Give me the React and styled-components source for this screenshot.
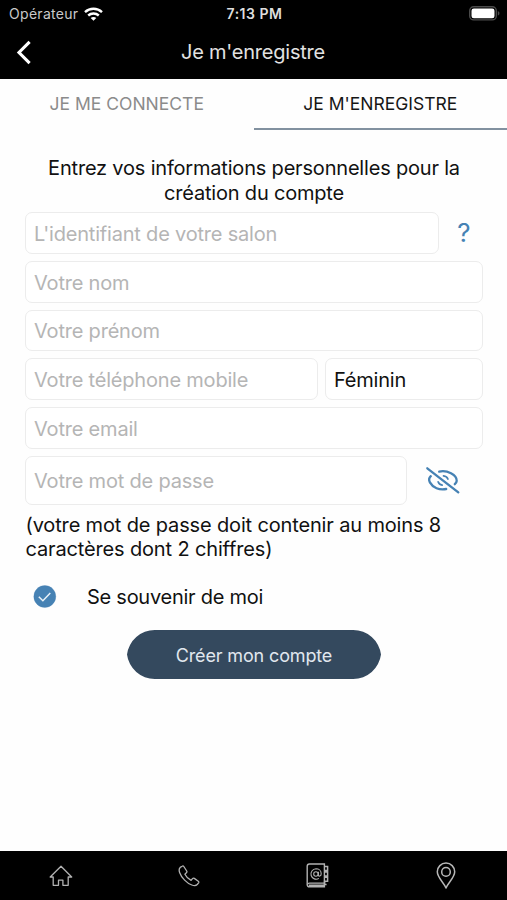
import React, { useState } from 'react';
import styled, { createGlobalStyle } from 'styled-components';

const GlobalStyle = createGlobalStyle`
  * { box-sizing: border-box; }
  body {
    margin: 0;
    background: #fff;
    font-family: Inter, Roboto, "Liberation Sans", sans-serif;
    color: #111;
  }
`;

const Screen = styled.div`
  height: 900px;
  display: flex;
  flex-direction: column;
  background: #fefefe;
`;

const StatusBar = styled.div`
  height: 28px;
  display: grid;
  grid-template-columns: 1fr auto 1fr;
  align-items: center;
  padding: 0 7px 1px 9px;
  background: #000;
`;

const Carrier = styled.div`
  display: flex;
  align-items: center;
  gap: 6px;
  font-size: 14px;
  letter-spacing: 0.3px;
  color: #c9c9c9;
`;

const Clock = styled.div`
  font-size: 14px;
  font-weight: 600;
  letter-spacing: 0.5px;
  color: #dedede;
`;

const BatterySlot = styled.div`
  display: flex;
  justify-content: flex-end;
`;

const NavBar = styled.div`
  height: 51px;
  display: grid;
  grid-template-columns: 60px 1fr 60px;
  align-items: center;
  padding-bottom: 4px;
  background: #000;
`;

const BackButton = styled.button`
  display: flex;
  padding: 1px 0 0 15px;
  border: none;
  background: none;
`;

const Title = styled.h1`
  margin: 0;
  padding-right: 1px;
  text-align: center;
  white-space: nowrap;
  font-size: 20px;
  font-weight: 400;
  letter-spacing: -0.23px;
  color: #e2e2e2;
`;

const Tabs = styled.div`
  display: flex;
  height: 51px;
`;

const Tab = styled.button`
  flex: 1;
  padding: 0 0 1px;
  border: none;
  border-bottom: 2px solid ${p => (p.$active ? '#8291a0' : 'transparent')};
  background: none;
  font: inherit;
  font-size: 17.5px;
  white-space: nowrap;
  color: ${p => (p.$active ? '#161616' : '#8b8b8b')};
`;

const Form = styled.div`
  flex: 1;
  display: flex;
  flex-direction: column;
  padding: 26px 24px 0 25px;
`;

const Intro = styled.p`
  margin: 0 0 7px;
  text-align: center;
  white-space: nowrap;
  font-size: 20px;
  line-height: 24.5px;
  letter-spacing: -0.19px;
`;

const Row = styled.div`
  display: flex;
  align-items: center;
  gap: 7px;
  margin-bottom: 7px;
`;

const Field = styled.div`
  flex: ${p => (p.$width ? `0 0 ${p.$width}` : '1')};
  height: ${p => p.$height || '41.8px'};
  display: flex;
  align-items: center;
  padding: 2px 8px 0;
  border: 1px solid #ececec;
  border-radius: 7px;
  background: #fff;
  white-space: nowrap;
  font-size: 20px;
  letter-spacing: -0.2px;
  color: ${p => (p.$filled ? '#111' : '#b5b5b5')};
`;

const Help = styled.span`
  width: 36px;
  text-align: center;
  font-size: 26px;
  color: #4682b4;
  line-height: 30px;
`;

const EyeButton = styled.button`
  display: flex;
  margin-left: 11px;
  padding: 0;
  border: none;
  background: none;
`;

const Hint = styled.p`
  margin: 1px 0 0;
  padding-left: 0.5px;
  white-space: nowrap;
  font-size: 20px;
  line-height: 24.5px;
  letter-spacing: -0.15px;
`;

const Remember = styled.div`
  display: flex;
  align-items: center;
  gap: 30px;
  height: 24px;
  margin: 23px 0 21px 8px;
  font-size: 20px;
  letter-spacing: -0.26px;
`;

const Submit = styled.button`
  align-self: center;
  width: 254px;
  height: 49px;
  padding: 2px 0 0;
  border: none;
  background: #34495e;
  clip-path: path('M0 24.5 A28 28 0 0 1 27.8 0 H226.2 A28 28 0 0 1 254 24.5 A28 28 0 0 1 226.2 49 H27.8 A28 28 0 0 1 0 24.5 Z');
  font: inherit;
  font-size: 18px;
  letter-spacing: -0.15px;
  color: #e1e7ee;
`;

const TabBar = styled.nav`
  height: 49px;
  display: grid;
  grid-template-columns: repeat(4, 128.5px);
  justify-content: center;
  align-items: center;
  justify-items: center;
  background: #000;
`;

const WifiIcon = () => (
  <svg width="19" height="14" viewBox="0 0 19 14" fill="none" stroke="#fff" strokeWidth="2.4">
    <path d="M1 5.1C5.8.7 13.2.7 18 5.1" />
    <path d="M4.2 8.5c3-2.7 7.6-2.7 10.6 0" />
    <path d="M9.5 13.8 6.7 11c1.6-1.5 4-1.5 5.6 0z" fill="#fff" stroke="none" />
  </svg>
);

const BatteryIcon = () => (
  <svg width="31" height="15" viewBox="0 0 31 15">
    <rect x=".7" y=".7" width="26.6" height="13.2" rx="4" fill="none" stroke="#4b4b4b" strokeWidth="1.4" />
    <rect x="2.5" y="2.4" width="23" height="9.8" rx="2.3" fill="#fff" />
    <path d="M28.8 5c2.2.8 2.2 3.8 0 4.6z" fill="#4b4b4b" />
  </svg>
);

const BackIcon = () => (
  <svg width="16" height="25" viewBox="0 0 16 25" fill="none" stroke="#fff" strokeWidth="3.1">
    <path d="M14.6 1.8 4 12.5l10.6 10.7" />
  </svg>
);

const EyeOffIcon = () => (
  <svg width="36" height="30" viewBox="0 0 36 30" fill="none" stroke="#4682b4" strokeWidth="2.3" strokeLinecap="round">
    <path d="m2.3 3.3 31 24" />
    <path d="M14.2 6.6C22 4.6 32 10 31.7 15.8c-.1 1.3-.7 2.3-1.9 3.4" />
    <path d="M5.8 11.2c-1.8 1.7-2.1 4-.9 6.2 2.9 5.3 9.4 8 16.3 6.6" />
    <path d="M18.5 10.8c2.1.2 3.8 1.4 4.4 3.3M13.1 16.8c.6 1.9 2 3 4.1 3.3" strokeWidth="1.7" />
  </svg>
);

const CheckIcon = ({ checked }) => (
  <svg width="24" height="24" viewBox="0 0 24 24" fill="none">
    <circle cx="11.8" cy="11.5" r="11" fill={checked ? '#4682b4' : '#fff'} stroke="#4682b4" strokeWidth=".3" />
    {checked && <path d="m5.8 11.8 4.1 4 7.4-7.8" stroke="#e8f1f8" strokeWidth="1.5" />}
  </svg>
);

const HomeIcon = () => (
  <svg width="24" height="22" viewBox="0 0 24 22" fill="none" stroke="#b2b2b2" strokeWidth="1.3" strokeLinejoin="round">
    <path d="M12 1.2 1.2 12h3v8.3h5.3v-5.2h4.4v5.2h5.3V12h3.5z" />
  </svg>
);

const PhoneIcon = () => (
  <svg width="22" height="22" viewBox="0 0 22 22" fill="none" stroke="#b2b2b2" strokeWidth="1.3" strokeLinejoin="round">
    <path d="M4.1 1.2 2.2 2.4C-.2 4.5 1.8 10.4 6.6 15.1c4.7 4.8 10.4 6.8 12.6 4.4l1.4-1.7c.4-.6.2-1.2-.3-1.6l-4-2.8c-.7-.4-1.3-.3-1.8.3l-1.4 1.7c-2.6-1.3-4.9-3.6-6.2-6.2l1.5-1.4c.6-.5.7-1.1.3-1.8L5.8 1.5c-.4-.6-1.1-.7-1.7-.3z" />
  </svg>
);

const ContactsIcon = () => (
  <svg width="24" height="25" viewBox="0 0 24 25" fill="none" stroke="#b2b2b2" strokeWidth="1.4">
    <path d="M18.4 1H3.4C1.9 1 1.2 1.8 1.2 3.2v18.2c0 1.6.8 2.4 2.3 2.4h14.9z" />
    <path d="M1.4 21.6c.2-1 1-1.5 2.1-1.5h14.9M3 22.2h15" />
    <path d="M18.6 3.5h3v4h-3M18.6 8.9h3v4h-3M18.6 14.3h3v4h-3v3.3h2" strokeWidth="1.5" />
    <circle cx="9.9" cy="11" r="2.2" strokeWidth="1.1" />
    <path d="M12.4 8.7v3.2c0 2 2.8 1.5 2.8-1.2 0-3-2.3-4.9-5.2-4.9a5.2 5.2 0 1 0 2.9 9.6" strokeWidth="1.1" />
  </svg>
);

const PinIcon = () => (
  <svg width="20" height="27" viewBox="0 0 20 27" fill="none" stroke="#b8b8b8" strokeWidth="1.5" strokeLinejoin="round">
    <path d="M10 26C8.1 20.8 1.3 15.7 1.3 9.8a8.7 8.7 0 0 1 17.4 0c0 5.9-6.8 11-8.7 16.2z" />
    <circle cx="10" cy="9.9" r="4.3" />
  </svg>
);

const App = () => {
  const [tab, setTab] = useState('register');
  const [remember, setRemember] = useState(true);

  return (
    <>
      <GlobalStyle />
      <Screen>
        <StatusBar>
          <Carrier>Opérateur <WifiIcon /></Carrier>
          <Clock>7:13 PM</Clock>
          <BatterySlot><BatteryIcon /></BatterySlot>
        </StatusBar>
        <NavBar>
          <BackButton aria-label="Retour"><BackIcon /></BackButton>
          <Title>Je m'enregistre</Title>
        </NavBar>
        <Tabs>
          <Tab $active={tab === 'login'} onClick={() => setTab('login')}>JE ME CONNECTE</Tab>
          <Tab $active={tab === 'register'} onClick={() => setTab('register')}>JE M'ENREGISTRE</Tab>
        </Tabs>
        <Form>
          <Intro>
            Entrez vos informations personnelles pour la<br />
            création du compte
          </Intro>
          <Row>
            <Field $width="414px">L'identifiant de votre salon</Field>
            <Help>?</Help>
          </Row>
          <Row><Field>Votre nom</Field></Row>
          <Row><Field>Votre prénom</Field></Row>
          <Row>
            <Field $width="293px">Votre téléphone mobile</Field>
            <Field $filled>Féminin</Field>
          </Row>
          <Row><Field>Votre email</Field></Row>
          <Row>
            <Field $width="382px" $height="49px">Votre mot de passe</Field>
            <EyeButton aria-label="Afficher le mot de passe"><EyeOffIcon /></EyeButton>
          </Row>
          <Hint>
            (votre mot de passe doit contenir au moins 8<br />
            caractères dont 2 chiffres)
          </Hint>
          <Remember onClick={() => setRemember(!remember)}>
            <CheckIcon checked={remember} />
            <span>Se souvenir de moi</span>
          </Remember>
          <Submit>Créer mon compte</Submit>
        </Form>
        <TabBar>
          <HomeIcon />
          <PhoneIcon />
          <ContactsIcon />
          <PinIcon />
        </TabBar>
      </Screen>
    </>
  );
};

export default App;
